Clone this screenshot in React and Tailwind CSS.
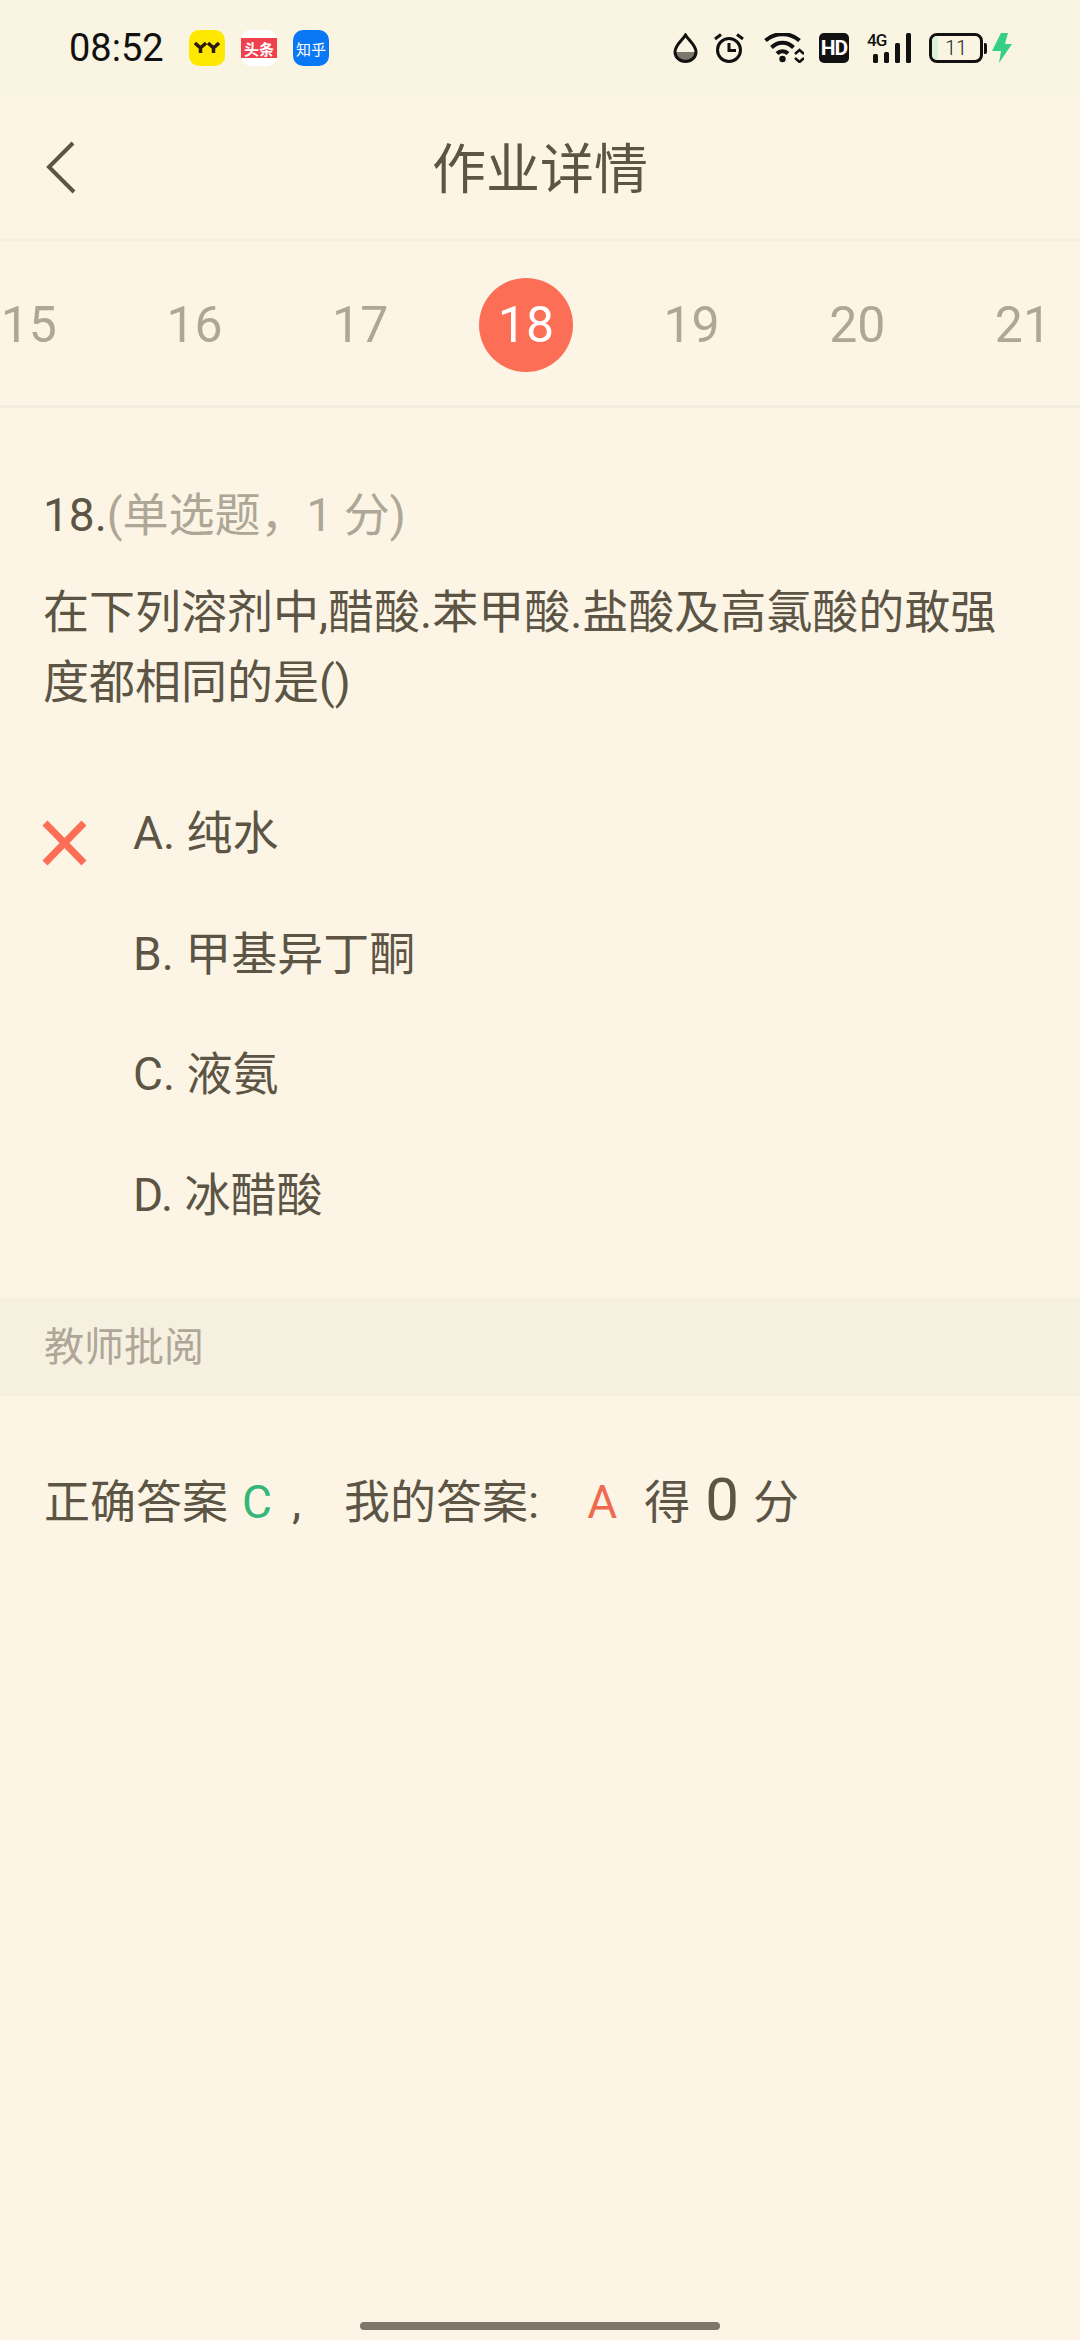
import React from 'react';

const numbers = [15, 16, 17, 18, 19, 20, 21];
const options = ['A. 纯水', 'B. 甲基异丁酮', 'C. 液氨', 'D. 冰醋酸'];

function StatusIcons() {
  return (
    <div className="flex items-center h-[36px]">
      {/* drop */}
      <svg width="25" height="30" viewBox="0 0 25 30">
        <path d="M2 19 A10.5 9.5 0 0 0 23 19 Z" fill="#7b776d" />
        <path d="M12.5 2 C9 8 2 12 2 19 A10.5 9.5 0 0 0 23 19 C23 12 16 8 12.5 2 Z" fill="none" stroke="#111" strokeWidth="3" />
      </svg>
      {/* alarm */}
      <svg width="30" height="30" viewBox="0 0 30 30" className="ml-[16px]">
        <circle cx="15" cy="17" r="11.5" fill="none" stroke="#111" strokeWidth="3" />
        <path d="M15 10 V17.5 H22" fill="none" stroke="#111" strokeWidth="3" />
        <path d="M1 6 L7 1.5 M29 6 L23 1.5" stroke="#111" strokeWidth="3" />
      </svg>
      {/* wifi */}
      <svg width="40" height="30" viewBox="0 0 40 30" className="ml-[20px]">
        <path d="M1.5 7.5 C11 -1 26 -1 35.5 7.5" fill="none" stroke="#111" strokeWidth="4" />
        <path d="M7.5 14.5 C14 8 23 8 29.5 14.5" fill="none" stroke="#111" strokeWidth="4" />
        <path d="M13 20.5 C16 17.5 21 17.5 24 20.5" fill="none" stroke="#111" strokeWidth="4" />
        <circle cx="18.5" cy="26" r="3.2" fill="#111" />
        <path d="M31 21 L35.5 17 L40 21 M31 25 L35.5 29 L40 25" fill="none" stroke="#111" strokeWidth="2.5" />
      </svg>
      {/* HD */}
      <div className="ml-[15px] w-[30px] h-[30px] rounded-[5px] bg-[#111] flex items-center justify-center text-white text-[21px] leading-none font-bold font-['Roboto',sans-serif] tracking-[-1px]">HD</div>
      {/* 4G + signal */}
      <div className="ml-[18px] w-[44px] h-[30px] relative">
        <span className="absolute left-0 top-[0px] text-[17px] leading-[15px] font-medium text-[#111] font-['Roboto',sans-serif] tracking-[-1px]">4G</span>
        <svg width="44" height="30" viewBox="0 0 44 30" className="absolute left-0 top-0">
          <rect x="6" y="21" width="5" height="9" rx="1.5" fill="#111" />
          <rect x="17" y="19" width="5" height="11" rx="1.5" fill="#111" />
          <rect x="28" y="10" width="5" height="20" rx="1.5" fill="#111" />
          <rect x="39" y="0" width="5" height="30" rx="1.5" fill="#111" />
        </svg>
      </div>
      {/* battery */}
      <div className="ml-[18px] flex items-center">
        <div className="w-[54px] h-[30px] rounded-[8px] border-[3px] border-[#111] flex items-center justify-center overflow-hidden relative">
          <div className="absolute left-0 top-0 bottom-0 w-[6px] bg-[#dff0d8]"></div>
          <span className="relative text-[20px] leading-none text-[#222] font-['Roboto',sans-serif] font-light">11</span>
        </div>
        <div className="ml-[1px] w-[3px] h-[11px] bg-[#111] rounded-r-[2px]"></div>
      </div>
      {/* bolt */}
      <svg width="20" height="30" viewBox="0 0 20 30" className="ml-[5px]">
        <path d="M9 0 H16 L13 11 H20 L7 30 L9 18 H0 Z" fill="#35d083" />
      </svg>
    </div>
  );
}

export default function App() {
  return (
    <div className="w-[1080px] h-[2340px] flex flex-col bg-[#fcf5e5] text-[#5c5545] font-['Roboto','Noto_Sans_CJK_SC',sans-serif] overflow-hidden">

      {/* status bar */}
      <div className="h-[96px] shrink-0 bg-[#faf4e3] flex items-start justify-between pt-[30px] pl-[69px] pr-[68px]">
        <div className="flex items-center h-[36px]">
          <span className="text-[38px] leading-none text-[#111] w-[120px] font-['Roboto',sans-serif]">08:52</span>
          <div className="w-[36px] h-[36px] rounded-[10px] bg-[#ffe800] flex items-center justify-center">
            <svg width="26" height="14" viewBox="0 0 26 14">
              <path d="M1 2 L6.5 7 L12 2 M6.5 7 V12 M14 2 L19.5 7 L25 2 M19.5 7 V12" fill="none" stroke="#2a1a10" strokeWidth="3.5" />
            </svg>
          </div>
          <div className="ml-[16px] w-[36px] h-[36px] rounded-[10px] bg-white flex items-center justify-center">
            <div className="w-[36px] h-[20px] bg-[#f0414e] flex items-center justify-center text-white text-[15px] leading-none font-bold font-['Noto_Sans_CJK_SC',sans-serif]">头条</div>
          </div>
          <div className="ml-[16px] w-[36px] h-[36px] rounded-[10px] bg-[#0a78f5] flex items-center justify-center text-white text-[15px] leading-none font-['Noto_Sans_CJK_SC',sans-serif]">知乎</div>
        </div>
        <StatusIcons />
      </div>

      {/* title bar */}
      <div className="h-[145px] shrink-0 flex items-center relative border-b-2 border-[#f5efdf]">
        <svg width="34" height="54" viewBox="0 0 34 54" className="absolute left-[44px] top-[44px]">
          <path d="M29 3 L5 27 L30 52" fill="none" stroke="#5c5545" strokeWidth="4" />
        </svg>
        <h1 className="w-full text-center text-[54px] leading-none font-normal pt-[7px]">作业详情</h1>
      </div>

      {/* question numbers */}
      <div className="h-[167px] shrink-0 flex items-center border-b-[3px] border-[#f3eee0] overflow-hidden">
        <div className="flex ml-[-54px] pt-[3px]">
          {numbers.map((n) => (
            <div key={n} className="w-[165.7px] shrink-0 flex justify-center">
              <div className={n === 18
                ? 'w-[94px] h-[94px] rounded-full bg-[#fc6e55] text-white flex items-center justify-center text-[50px] leading-none'
                : 'w-[94px] h-[94px] flex items-center justify-center text-[#aea797] text-[50px] leading-none'}>
                {n}
              </div>
            </div>
          ))}
        </div>
      </div>

      {/* question */}
      <div className="px-[43px] pt-[72px]">
        <p className="text-[46px] leading-[70px]">18.<span className="text-[#aea797]">(单选题，1 分)</span></p>
        <p className="mt-[27px] text-[46px] leading-[70px] w-[980px]">在下列溶剂中,醋酸.苯甲酸.盐酸及高氯酸的敢强度都相同的是()</p>
      </div>

      {/* options */}
      <div className="mt-[81px] px-[42px]">
        {options.map((o, i) => (
          <div key={o} className="h-[120.5px] flex">
            <div className="w-[91px] shrink-0 pt-[22px]">
              {i === 0 && (
                <svg width="45" height="46" viewBox="0 0 45 46">
                  <path d="M3 3 L42 43 M42 3 L3 43" stroke="#fc6e55" strokeWidth="7" />
                </svg>
              )}
            </div>
            <span className="text-[46px] leading-[70px]">{o}</span>
          </div>
        ))}
      </div>

      {/* teacher review */}
      <div className="mt-[18px] h-[98px] shrink-0 bg-[#f6f0e1] flex items-center px-[44px] pt-[2px] text-[40px] leading-none text-[#aea797]">教师批阅</div>

      <div className="mt-[69px] px-[44px] flex items-center text-[46px] leading-[70px] whitespace-nowrap">
        <span>正确答案</span>
        <span className="ml-[14px] text-[#35b678]">C</span>
        <span className="ml-[20px]">,</span>
        <span className="ml-[43px]">我的答案:</span>
        <span className="ml-[48px] text-[#ee6a50]">A</span>
        <span className="ml-[27px]">得</span>
        <span className="ml-[15px] text-[60px] pb-[4px]">0</span>
        <span className="ml-[14px]">分</span>
      </div>

      {/* home indicator */}
      <div className="mt-auto mb-[10px] mx-auto w-[360px] h-[8px] rounded-full bg-[#7d7769]"></div>
    </div>
  );
}
